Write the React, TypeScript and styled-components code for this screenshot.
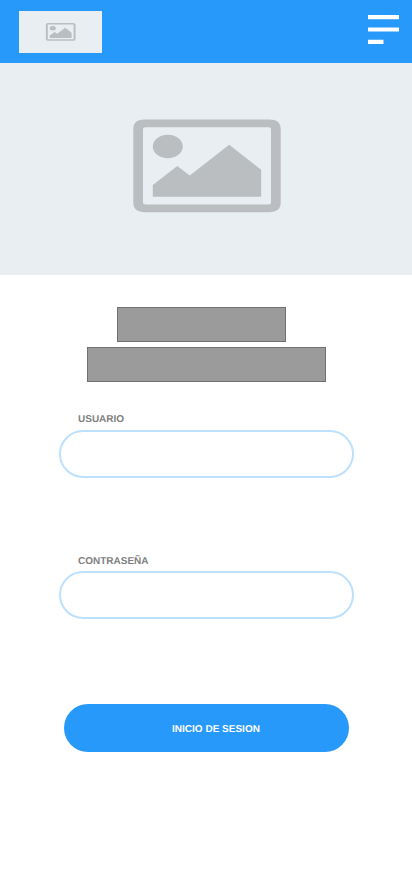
import React from 'react';
import styled, { createGlobalStyle } from 'styled-components';

const GlobalStyle = createGlobalStyle`
  * { box-sizing: border-box; }
  body {
    margin: 0;
    background: #fff;
    font-family: "Liberation Sans", Arial, sans-serif;
    text-rendering: geometricPrecision;
  }
`;

const Page = styled.div`
  display: flex;
  flex-direction: column;
  width: 100%;
  min-height: 870px;
  background: #fff;
`;

const Header = styled.header`
  display: flex;
  justify-content: space-between;
  align-items: flex-start;
  height: 63px;
  padding: 11px 13px 0 19px;
  background: #2699fb;
`;

const Logo = styled.div`
  width: 83px;
  height: 42px;
  padding-top: 1px;
  overflow: hidden;
  background: #e8eef1;
`;

const MenuButton = styled.button`
  display: block;
  width: 31px;
  height: 30px;
  margin-top: 4px;
  padding: 0;
  border: 0;
  background: none;
`;

const Hero = styled.div`
  height: 212px;
  background: #e8eef1;
`;

const Picture = styled.svg`
  display: block;
  width: 100%;
  height: 100%;
`;

const Titles = styled.div`
  display: flex;
  flex-direction: column;
  gap: 5px;
  padding: 32px 0 0 87px;
`;

const TitleBlock = styled.div<{ $width: number; $indent?: number }>`
  width: ${(p) => p.$width}px;
  height: 35px;
  margin-left: ${(p) => p.$indent ?? 0}px;
  border: 1px solid #707070;
  background: #9b9b9b;
`;

const Form = styled.form`
  display: flex;
  flex-direction: column;
  padding: 32px 58px 0 59px;
`;

const Field = styled.label<{ $gap: number; $labelHeight: number }>`
  display: flex;
  flex-direction: column;
  margin-bottom: ${(p) => p.$gap}px;

  > span {
    height: ${(p) => p.$labelHeight}px;
  }
`;

const Label = styled.span`
  padding-left: 19px;
  color: #7f7f7f;
  font-size: 10px;
  font-weight: 700;
  line-height: 12px;
`;

const Input = styled.input`
  width: 295px;
  height: 48px;
  padding: 0 20px;
  border: 2px solid #bce0fd;
  border-radius: 24px;
  background: #fff;
  font: inherit;
  outline: none;
`;

const Submit = styled.button`
  width: 285px;
  height: 48px;
  margin-left: 5px;
  padding: 3px 0 0 19px;
  border: 0;
  border-radius: 24px;
  background: #2699fb;
  color: #fff;
  font-family: inherit;
  font-size: 10px;
  font-weight: 700;
  line-height: 12px;
  text-rendering: inherit;
`;

function PlaceholderPicture() {
  return (
    <Picture viewBox="0 0 412 212" preserveAspectRatio="none" fill="#babec1">
      <path
        fillRule="evenodd"
        d="M145 56.6H269Q280.7 56.6 280.7 66V139.5Q280.7 149.2 269 149.2H145Q133.3 149.2 133.3 139.5V66Q133.3 56.6 145 56.6ZM145.5 64.2Q143 64.2 143 66V139.8Q143 141.4 145.5 141.4H268.5Q271 141.4 271 139.8V66Q271 64.2 268.5 64.2Z"
      />
      <ellipse cx="167.8" cy="83.5" rx="15" ry="11.7" />
      <path d="M152.8 122L177.3 103L189.8 112.6L229.2 81.8L261.2 106.8V133.8H152.8Z" />
    </Picture>
  );
}

export default function App() {
  return (
    <>
      <GlobalStyle />
      <Page>
        <Header>
          <Logo>
            <PlaceholderPicture />
          </Logo>
          <MenuButton aria-label="Menú">
            <svg width="31" height="30" viewBox="0 0 31 30" fill="#fff" display="block">
              <path d="M0 0H31V4.3H0ZM0 12.4H31V16.5H0ZM0 24.7H15.5V29H0Z" />
            </svg>
          </MenuButton>
        </Header>
        <Hero>
          <PlaceholderPicture />
        </Hero>
        <Titles>
          <TitleBlock $width={169} $indent={30} />
          <TitleBlock $width={239} />
        </Titles>
        <Form onSubmit={(e) => e.preventDefault()}>
          <Field $gap={78} $labelHeight={16}>
            <Label>USUARIO</Label>
            <Input type="text" />
          </Field>
          <Field $gap={85} $labelHeight={15}>
            <Label>CONTRASEÑA</Label>
            <Input type="password" />
          </Field>
          <Submit type="submit">INICIO DE SESION</Submit>
        </Form>
      </Page>
    </>
  );
}
